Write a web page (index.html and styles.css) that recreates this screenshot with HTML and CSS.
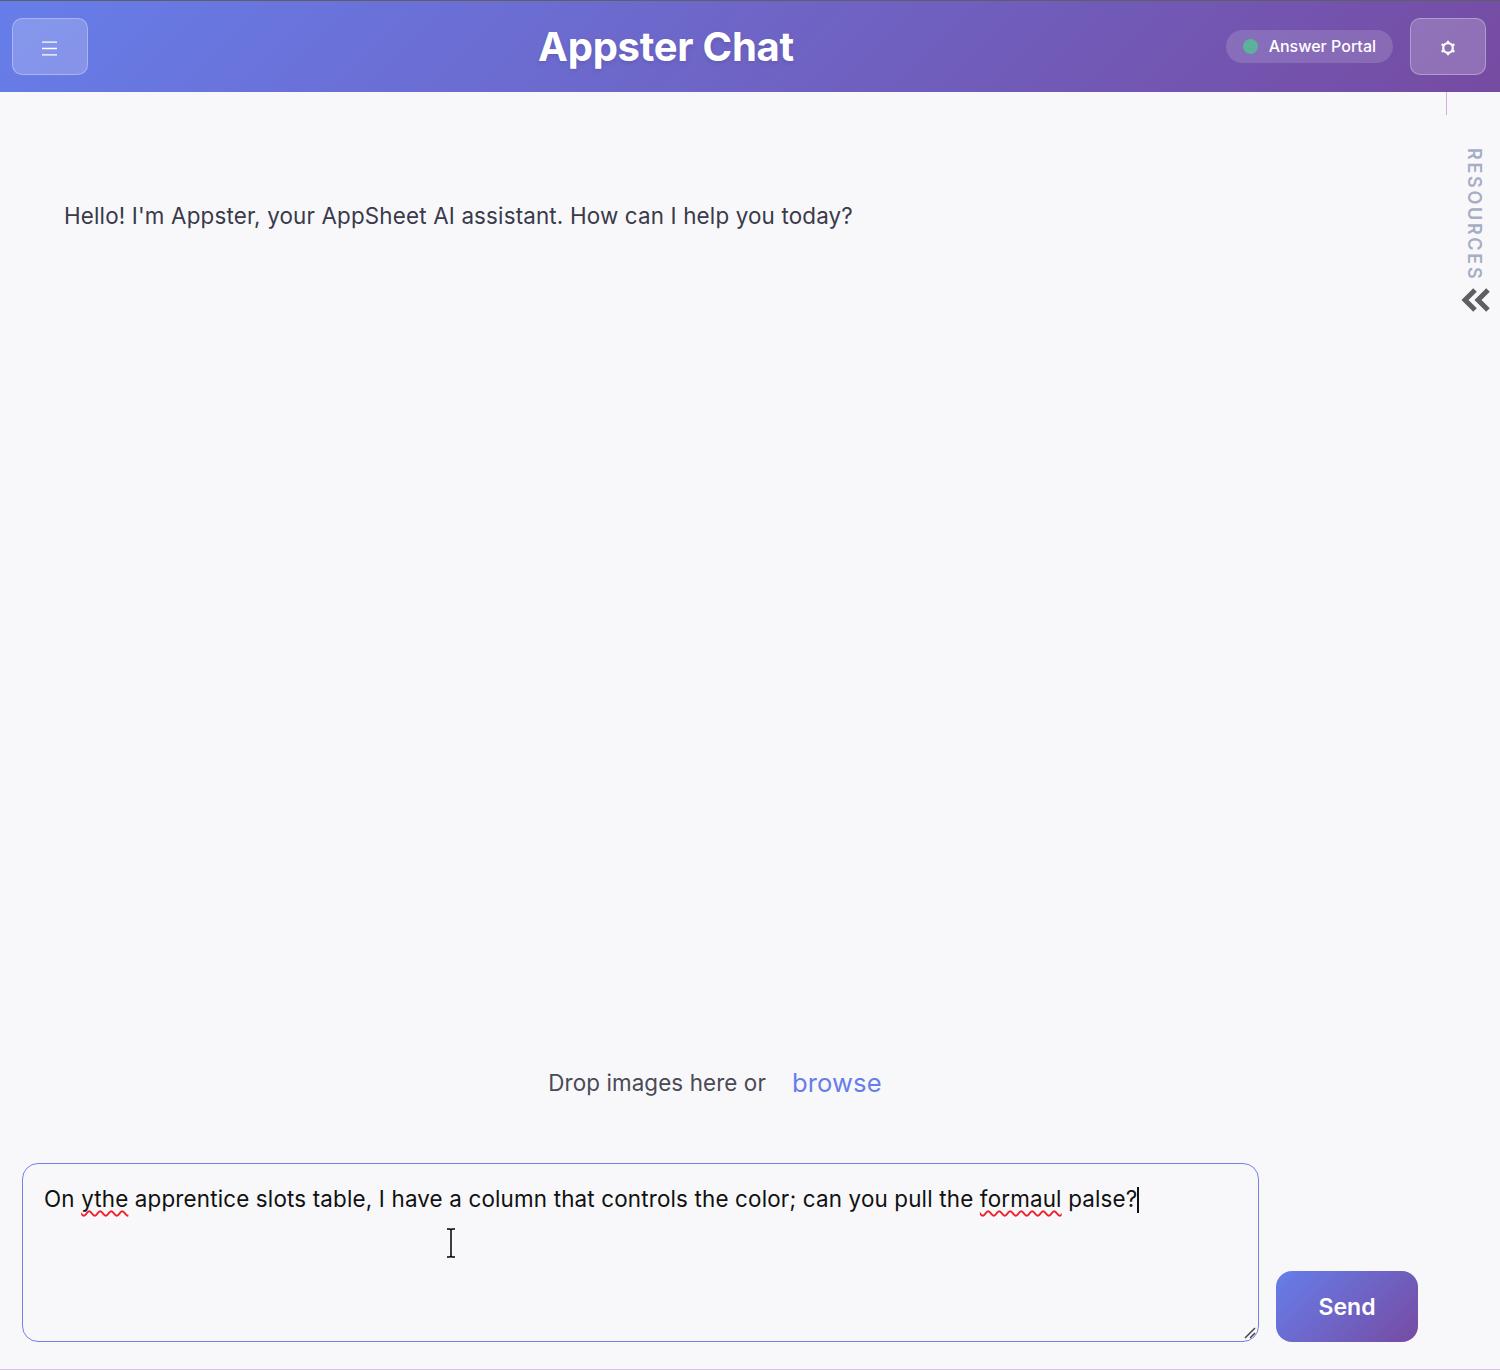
FILE: index.html
```html
<!DOCTYPE html>
<html lang="en">
<head>
<meta charset="utf-8">
<title>Appster Chat</title>
<link rel="stylesheet" href="styles.css">
</head>
<body>
<div class="app">
  <header class="header">
    <button class="icon-btn menu-btn">
      <svg width="15" height="15" viewBox="0 0 15 15"><path d="M0 1.2h15M0 7.5h15M0 13.8h15" fill="none" stroke="#fff" stroke-width="1.3"/></svg>
    </button>
    <h1 class="title">Appster Chat</h1>
    <div class="header-right">
      <div class="status"><span class="dot"></span><span>Answer Portal</span></div>
      <button class="icon-btn">
        <svg width="16" height="16" viewBox="0 0 16 16"><circle cx="8" cy="8" r="4.8" fill="none" stroke="#fff" stroke-width="2.2"/><path d="M8 0.8v2M8 13.2v2M1.6 4.3l1.8 1M12.6 10.7l1.8 1M1.6 11.7l1.8-1M12.6 5.3l1.8-1" fill="none" stroke="#fff" stroke-width="2.2"/></svg>
      </button>
    </div>
  </header>
  <main class="main">
    <div class="messages">
      <p class="greeting">Hello! I'm Appster, your AppSheet AI assistant. How can I help you today?</p>
    </div>
    <div class="drop"><span>Drop images here or</span><a class="browse">browse</a></div>
    <div class="composer">
      <div class="input">On <span class="typo">ythe</span> apprentice slots table, I have a column that controls the color; can you pull the <span class="typo">formaul</span> palse?<span class="caret"></span>
        <svg class="grip" width="14" height="14" viewBox="0 0 14 14"><path d="M2 12 12 2M7 12l5-5" fill="none" stroke="#444" stroke-width="1.5"/></svg>
      </div>
      <button class="send">Send</button>
    </div>
    <aside class="rail">
      <span class="rail-line"></span>
      <span class="rail-label">RESOURCES</span>
      <span class="rail-toggle">
        <svg width="32" height="26" viewBox="0 0 32 26"><path d="M14 3 4 13l10 10M27 3 17 13l10 10" fill="none" stroke="#5f5f63" stroke-width="5"/></svg>
      </span>
    </aside>
    <svg class="ibeam" width="12" height="30" viewBox="0 0 12 30"><path d="M2 1h3l1 1 1-1h3M6 2v26M2 29h3l1-1 1 1h3" fill="none" stroke="#000" stroke-width="1.5"/></svg>
  </main>
</div>
</body>
</html>
```
FILE: styles.css
```css
* { box-sizing: border-box; }
html, body { margin: 0; height: 100%; }
body { font-family: Inter, "Liberation Sans", sans-serif; background: #f8f8fb; color: #333; }
.app { height: 1370px; display: flex; flex-direction: column; border-top: 1px solid #5e5e66; border-bottom: 1px solid #d6bfe6; }
.header { height: 91px; flex: none; display: flex; align-items: center; padding: 0 14px 0 12px; background: linear-gradient(135deg, #667eea 0%, #764ba2 100%); color: #fff; }
.icon-btn { width: 76px; height: 57px; margin-top: -1px; border: 1px solid rgba(255,255,255,.3); border-radius: 10px; background: rgba(255,255,255,.2); display: flex; align-items: center; justify-content: center; padding: 4px 0 0; }
.menu-btn { padding-right: 2px; }
.title { flex: 1; margin: 0; padding-left: 18px; text-align: center; font-size: 40px; font-weight: 700; letter-spacing: -.25px; line-height: 48px; position: relative; text-shadow: 0 2px 4px rgba(0,0,0,.1); }
.header-right { display: flex; align-items: center; gap: 17px; }
.status { height: 33px; width: 167px; margin-top: -1px; padding: 0 17px; display: flex; align-items: center; gap: 11px; border-radius: 17px; background: rgba(255,255,255,.15); font-size: 16px; font-weight: 500; white-space: nowrap; }
.dot { width: 15px; height: 15px; border-radius: 50%; background: #5db09a; }
.main { flex: 1; position: relative; display: flex; flex-direction: column; min-height: 0; }
.messages { flex: 1; padding: 110px 0 0 64px; }
.greeting { margin: 0; font-size: 22.4px; letter-spacing: .16px; line-height: 27px; color: #3a3a4a; }
.drop { display: flex; align-items: center; justify-content: center; gap: 26px; padding-right: 70px; height: 36px; margin-bottom: 63px; font-size: 22.4px; letter-spacing: .1px; color: #4a4a55; }
.browse { color: #667eea; font-size: 25.6px; letter-spacing: .1px; }
.composer { display: flex; align-items: flex-end; gap: 17px; padding: 0 0 27px 22px; }
.input { position: relative; width: 1237px; height: 179px; padding: 21px 21px; border: 1px solid #7680e8; border-radius: 16px; font-size: 22.4px; letter-spacing: .165px; line-height: 28px; color: #111; white-space: nowrap; }
.typo { text-decoration: underline wavy #f0202a 1.6px; text-decoration-skip-ink: none; text-underline-offset: 3px; }
.caret { display: inline-block; width: 2px; height: 26px; background: #111; vertical-align: -6px; }
.grip { position: absolute; right: 1px; bottom: 1px; }
.send { width: 142px; height: 71px; border: 0; border-radius: 16px; background: linear-gradient(135deg, #667eea 0%, #764ba2 100%); color: #fff; font: 600 23px Inter, sans-serif; }
.rail { position: absolute; top: 0; right: 0; width: 54px; height: 230px; display: flex; flex-direction: column; }
.rail-line { position: absolute; left: 0; top: 0; width: 1px; height: 23px; background: #d8a8ea; }
.rail-label { position: absolute; left: 18px; top: 56px; writing-mode: vertical-rl; font-size: 18px; font-weight: 600; line-height: 20px; color: #a5aec4; letter-spacing: 2.7px; }
.rail-toggle { position: absolute; left: 15px; top: 195px; display: block; line-height: 0; }
.ibeam { position: absolute; left: 445px; top: 1136px; }
```
